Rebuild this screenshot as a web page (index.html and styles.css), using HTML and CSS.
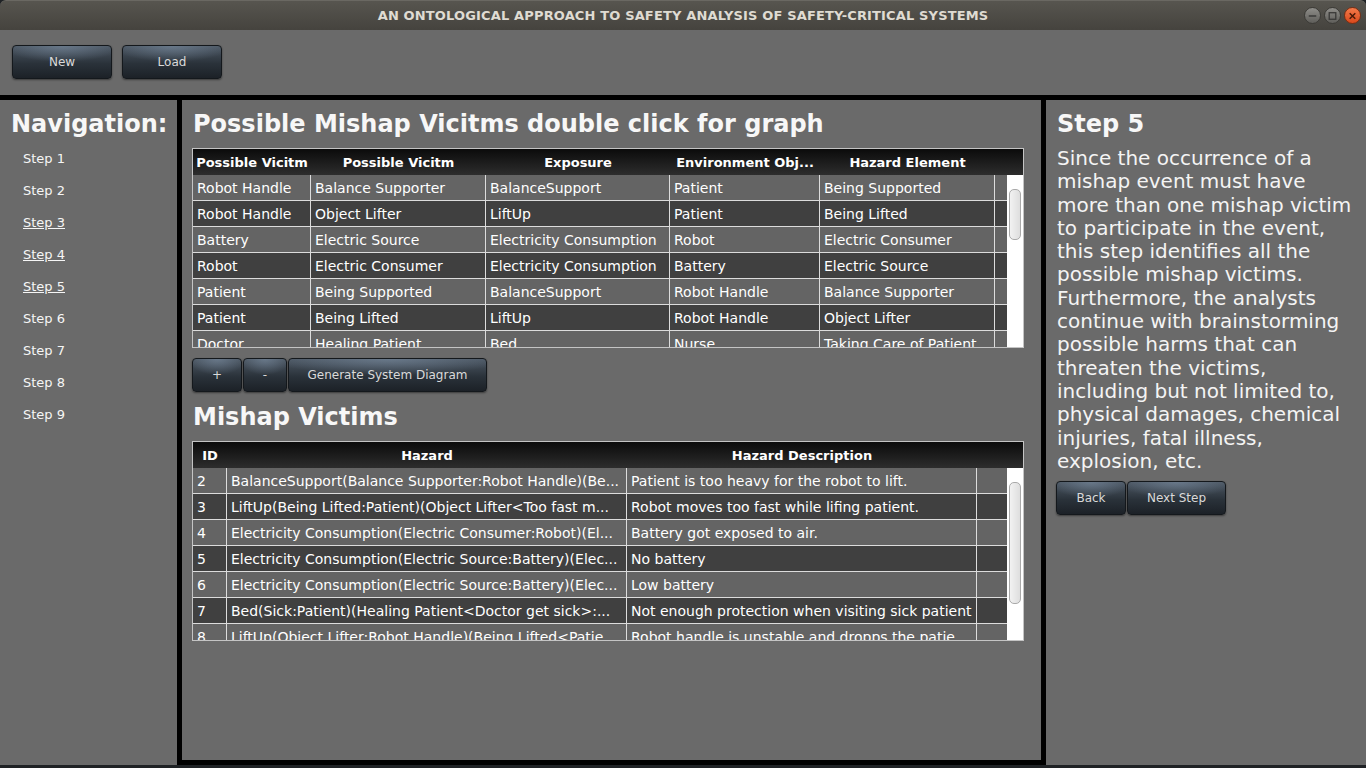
FILE: index.html
```html
<!DOCTYPE html>
<html>
<head>
<meta charset="utf-8">
<title>Safety Analysis</title>
<link rel="stylesheet" href="styles.css">
</head>
<body>
<div class="window">
  <header class="titlebar">
    <div class="spacer"></div>
    <div class="title">AN ONTOLOGICAL APPROACH TO SAFETY ANALYSIS OF SAFETY-CRITICAL SYSTEMS</div>
    <div class="wctl">
      <span class="wbtn"><svg width="16" height="16" viewBox="0 0 16 16"><line x1="4" y1="8" x2="12" y2="8" stroke="#3a3a38" stroke-width="1.6"/></svg></span>
      <span class="wbtn"><svg width="16" height="16" viewBox="0 0 16 16"><rect x="4.5" y="4.5" width="7" height="7" fill="none" stroke="#3a3a38" stroke-width="1.4"/></svg></span>
      <span class="wbtn close"><svg width="16" height="16" viewBox="0 0 16 16"><path d="M5 5 L11 11 M11 5 L5 11" stroke="#4a1a08" stroke-width="1.6"/></svg></span>
    </div>
  </header>

  <div class="toolbar">
    <button class="btn w100">New</button>
    <button class="btn w100">Load</button>
  </div>

  <div class="main">
    <nav class="nav">
      <h1 class="heading">Navigation:</h1>
      <ul class="steps">
        <li><a class="step">Step 1</a></li>
        <li><a class="step">Step 2</a></li>
        <li><a class="step visited">Step 3</a></li>
        <li><a class="step visited">Step 4</a></li>
        <li><a class="step visited">Step 5</a></li>
        <li><a class="step">Step 6</a></li>
        <li><a class="step">Step 7</a></li>
        <li><a class="step">Step 8</a></li>
        <li><a class="step">Step 9</a></li>
      </ul>
    </nav>

    <section class="center">
      <h2 class="heading">Possible Mishap Vicitms double click for graph</h2>
      <div class="table t1">
        <div class="thead">
          <div class="th">Possible Vicitm</div>
          <div class="th">Possible Vicitm</div>
          <div class="th">Exposure</div>
          <div class="th">Environment Obj...</div>
          <div class="th">Hazard Element</div>
          <div class="th"></div>
        </div>
        <div class="tbody">
          <div class="rows">
            <div class="row light"><div class="td">Robot Handle</div><div class="td">Balance Supporter</div><div class="td">BalanceSupport</div><div class="td">Patient</div><div class="td">Being Supported</div><div class="td"></div></div>
            <div class="row dark"><div class="td">Robot Handle</div><div class="td">Object Lifter</div><div class="td">LiftUp</div><div class="td">Patient</div><div class="td">Being Lifted</div><div class="td"></div></div>
            <div class="row light"><div class="td">Battery</div><div class="td">Electric Source</div><div class="td">Electricity Consumption</div><div class="td">Robot</div><div class="td">Electric Consumer</div><div class="td"></div></div>
            <div class="row dark"><div class="td">Robot</div><div class="td">Electric Consumer</div><div class="td">Electricity Consumption</div><div class="td">Battery</div><div class="td">Electric Source</div><div class="td"></div></div>
            <div class="row light"><div class="td">Patient</div><div class="td">Being Supported</div><div class="td">BalanceSupport</div><div class="td">Robot Handle</div><div class="td">Balance Supporter</div><div class="td"></div></div>
            <div class="row dark"><div class="td">Patient</div><div class="td">Being Lifted</div><div class="td">LiftUp</div><div class="td">Robot Handle</div><div class="td">Object Lifter</div><div class="td"></div></div>
            <div class="row light"><div class="td">Doctor</div><div class="td">Healing Patient</div><div class="td">Bed</div><div class="td">Nurse</div><div class="td">Taking Care of Patient</div><div class="td"></div></div>
          </div>
          <div class="vscroll"><div class="thumb thumb1"></div></div>
        </div>
      </div>

      <div class="btnrow">
        <button class="btn w50">+</button>
        <button class="btn w44">-</button>
        <button class="btn w198">Generate System Diagram</button>
      </div>

      <h2 class="heading">Mishap Victims</h2>
      <div class="table t2">
        <div class="thead">
          <div class="th">ID</div>
          <div class="th">Hazard</div>
          <div class="th">Hazard Description</div>
          <div class="th"></div>
        </div>
        <div class="tbody">
          <div class="rows">
            <div class="row light"><div class="td">2</div><div class="td">BalanceSupport(Balance Supporter:Robot Handle)(Be...</div><div class="td">Patient is too heavy for the robot to lift.</div><div class="td"></div></div>
            <div class="row dark"><div class="td">3</div><div class="td">LiftUp(Being Lifted:Patient)(Object Lifter&lt;Too fast m...</div><div class="td">Robot moves too fast while lifing patient.</div><div class="td"></div></div>
            <div class="row light"><div class="td">4</div><div class="td">Electricity Consumption(Electric Consumer:Robot)(El...</div><div class="td">Battery got exposed to air.</div><div class="td"></div></div>
            <div class="row dark"><div class="td">5</div><div class="td">Electricity Consumption(Electric Source:Battery)(Elec...</div><div class="td">No battery</div><div class="td"></div></div>
            <div class="row light"><div class="td">6</div><div class="td">Electricity Consumption(Electric Source:Battery)(Elec...</div><div class="td">Low battery</div><div class="td"></div></div>
            <div class="row dark"><div class="td">7</div><div class="td">Bed(Sick:Patient)(Healing Patient&lt;Doctor get sick&gt;:...</div><div class="td">Not enough protection when visiting sick patient</div><div class="td"></div></div>
            <div class="row light"><div class="td">8</div><div class="td">LiftUp(Object Lifter:Robot Handle)(Being Lifted&lt;Patie...</div><div class="td">Robot handle is unstable and dropps the patie...</div><div class="td"></div></div>
          </div>
          <div class="vscroll"><div class="thumb thumb2"></div></div>
        </div>
      </div>
    </section>

    <aside class="right">
      <h2 class="heading">Step 5</h2>
      <p class="desc">Since the occurrence of a mishap event must have more than one mishap victim to participate in the event, this step identifies all the possible mishap victims. Furthermore, the analysts continue with brainstorming possible harms that can threaten the victims, including but not limited to, physical damages, chemical injuries, fatal illness, explosion, etc.</p>
      <div class="btnrow">
        <button class="btn w70">Back</button>
        <button class="btn w99">Next Step</button>
      </div>
    </aside>
  </div>
</div>
</body>
</html>
```

FILE: styles.css
```css
* { box-sizing: border-box; }

html, body {
  margin: 0;
  padding: 0;
}

body {
  width: 1366px;
  height: 768px;
  overflow: hidden;
  background: #1f2225;
  font-family: "DejaVu Sans", "Liberation Sans", sans-serif;
  color: #f4f4f4;
}

.window {
  width: 1366px;
  display: flex;
  flex-direction: column;
}

/* Title bar */
.titlebar {
  height: 30px;
  display: grid;
  grid-template-columns: 1fr auto 1fr;
  align-items: center;
  background: linear-gradient(#57554f, #45433e);
  border-radius: 6px 6px 0 0;
  border-top: 1px solid #6a6862;
}

.title {
  font-size: 13px;
  font-weight: bold;
  color: #dfdbd2;
  letter-spacing: 0.15px;
  white-space: nowrap;
}

.wctl {
  justify-self: end;
  display: flex;
  gap: 3px;
  padding-right: 5px;
}

.wbtn {
  width: 17px;
  height: 17px;
  border-radius: 50%;
  display: flex;
  align-items: center;
  justify-content: center;
  background: linear-gradient(#8e8d89, #5f5e5a);
  border: 1px solid #3b3a36;
}

.wbtn.close {
  background: linear-gradient(#f47a4a, #d9491c);
  border-color: #7a2e12;
}

/* Toolbar */
.toolbar {
  height: 65px;
  background: #6a6a6a;
  display: flex;
  gap: 10px;
  padding: 15px 12px;
}

.btn {
  height: 34px;
  border: 1px solid #14181c;
  border-radius: 4px;
  background:
    radial-gradient(ellipse 60% 50% at 50% 0%, rgba(120, 138, 158, 0.65), rgba(120, 138, 158, 0) 100%),
    linear-gradient(#4c5763, #2a323a 55%, #1c2127);
  color: #dadada;
  font-family: "DejaVu Sans", sans-serif;
  font-size: 12px;
  padding: 0;
  box-shadow: 0 1px 2px rgba(0, 0, 0, 0.45);
}

.w100 { width: 100px; }
.w50 { width: 50px; }
.w44 { width: 44px; }
.w198 { width: 199px; }
.w70 { width: 70px; }
.w99 { width: 99px; }

/* Main area */
.main {
  height: 670px;
  border-top: 5px solid #000;
  display: flex;
}

.heading {
  margin: 0;
  font-size: 24px;
  font-weight: bold;
  line-height: 28px;
  color: #f7f7f7;
}

.nav {
  width: 177px;
  background: #6a6a6a;
  padding: 10px 10px 0 11px;
}

.steps {
  list-style: none;
  margin: 4px 0 0 0;
  padding: 0 0 0 12px;
}

.steps li {
  line-height: 32px;
  height: 32px;
}

.step {
  font-size: 13px;
  color: #f6f6f6;
  text-decoration: none;
}

.step.visited {
  text-decoration: underline;
}

.center {
  width: 869px;
  background: #6a6a6a;
  border-left: 5px solid #000;
  border-right: 5px solid #000;
  border-bottom: 5px solid #000;
  padding: 10px 10px 0 10px;
  display: flex;
  flex-direction: column;
  align-items: flex-start;
}

.center > .heading { padding-left: 1px; }

.right {
  flex: 1;
  background: #6a6a6a;
  padding: 10px 10px 0 10px;
}

.right > .heading { padding-left: 1px; }

.desc {
  margin: 9px 0 0 1px;
  width: 296px;
  font-size: 20px;
  line-height: 23.3px;
  color: #f4f4f4;
}

.right .btnrow {
  margin-top: 8px;
  display: flex;
  gap: 1px;
}

.center .btnrow {
  margin: 10px 0 11px 0;
  display: flex;
  gap: 1px;
}

/* Tables */
.table {
  width: 832px;
  height: 200px;
  border: 1px solid #c4c4c4;
  display: flex;
  flex-direction: column;
  margin-top: 10px;
  background: #fff;
}

.thead {
  height: 26px;
  display: grid;
  background: linear-gradient(#0b0b0b, #2d2d2d);
  font-size: 13px;
  font-weight: bold;
  color: #fff;
}

.th {
  line-height: 27px;
  text-align: center;
  white-space: nowrap;
  overflow: hidden;
}

.tbody {
  display: flex;
  height: 172px;
  overflow: hidden;
}

.rows {
  width: 814px;
  height: 172px;
  overflow: hidden;
}

.row {
  height: 26px;
  display: grid;
  border-bottom: 1px solid #dcdcdc;
  font-size: 14px;
  color: #fff;
}

.row.light { background: #646464; }
.row.dark { background: #404040; }

.td {
  line-height: 26px;
  padding: 0 4px;
  white-space: nowrap;
  overflow: hidden;
  border-right: 1px solid #dcdcdc;
}

.td:last-child { border-right: none; }

.t1 .thead { grid-template-columns: 118px 175px 184px 150px 175px 28px; }
.t1 .row { grid-template-columns: 118px 175px 184px 150px 175px 12px; }

.t2 .thead { grid-template-columns: 34px 400px 350px 46px; }
.t2 .row { grid-template-columns: 34px 400px 350px 30px; }

.vscroll {
  width: 16px;
  height: 172px;
  background: #fff;
  padding: 14px 2px 0 2px;
}

.thumb {
  width: 12px;
  border: 1px solid #a9a9a9;
  border-radius: 5px;
  background: linear-gradient(90deg, #f2f2f2, #dedede);
}

.thumb1 { height: 51px; }
.thumb2 { height: 122px; }
```
